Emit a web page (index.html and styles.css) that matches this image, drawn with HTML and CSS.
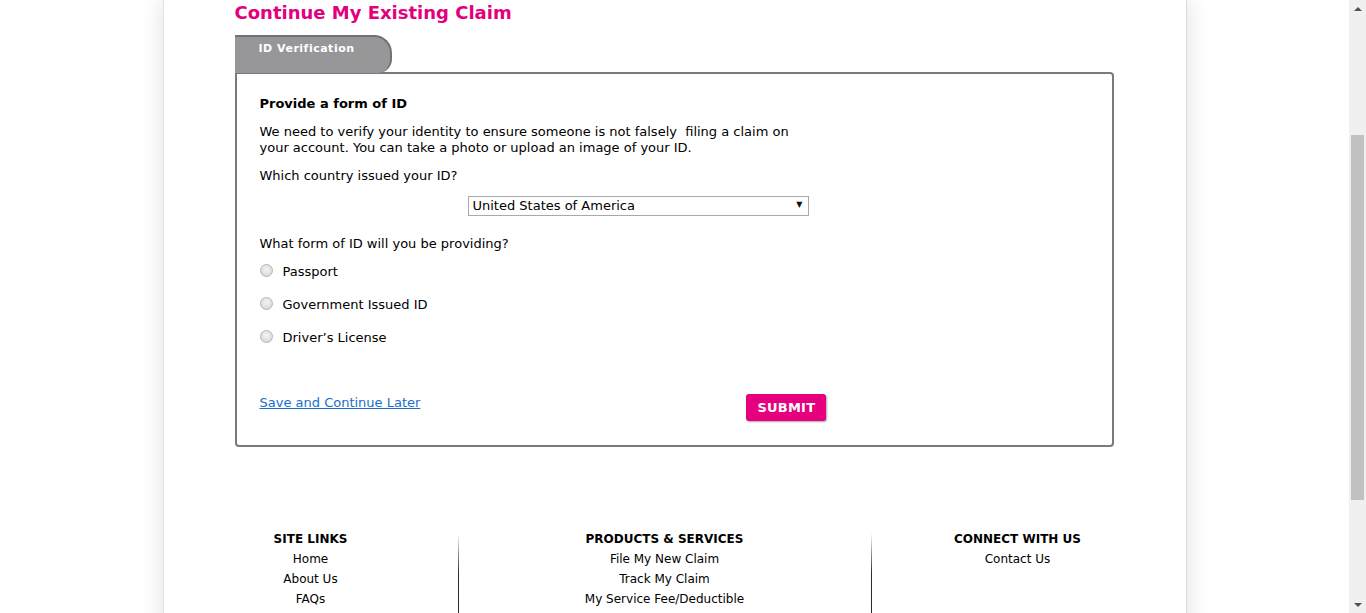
FILE: index.html
```html
<!DOCTYPE html>
<html lang="en">
<head>
<meta charset="utf-8">
<title>Continue My Existing Claim</title>
<link rel="stylesheet" href="styles.css">
</head>
<body>
<div class="viewport">
  <div class="page">
    <main class="main">
      <h1 class="title">Continue My Existing Claim</h1>
      <div class="tab">ID Verification</div>
      <section class="card">
        <h2 class="card-heading">Provide a form of ID</h2>
        <p class="para">We need to verify your identity to ensure someone is not falsely&nbsp; filing a claim on<br>your account. You can take a photo or upload an image of your ID.</p>
        <p class="question">Which country issued your ID?</p>
        <div class="select-row">
          <div class="select-wrap">
            <select class="select">
              <option>United States of America</option>
            </select>
            <span class="select-arrow">&#9660;</span>
          </div>
        </div>
        <p class="question q2">What form of ID will you be providing?</p>
        <div class="radios">
          <label class="radio-row"><input type="radio" name="idtype" class="radio"><span>Passport</span></label>
          <label class="radio-row"><input type="radio" name="idtype" class="radio"><span>Government Issued ID</span></label>
          <label class="radio-row"><input type="radio" name="idtype" class="radio"><span>Driver’s License</span></label>
        </div>
        <div class="actions">
          <a href="#" class="save-link">Save and Continue Later</a>
          <button class="submit" type="button">SUBMIT</button>
        </div>
      </section>
    </main>
    <footer class="footer">
      <div class="fcol fcol1">
        <h3 class="fhead">SITE LINKS</h3>
        <a href="#" class="flink">Home</a>
        <a href="#" class="flink">About Us</a>
        <a href="#" class="flink">FAQs</a>
      </div>
      <div class="fdivider"></div>
      <div class="fcol fcol2">
        <h3 class="fhead">PRODUCTS &amp; SERVICES</h3>
        <a href="#" class="flink">File My New Claim</a>
        <a href="#" class="flink">Track My Claim</a>
        <a href="#" class="flink">My Service Fee/Deductible</a>
      </div>
      <div class="fdivider"></div>
      <div class="fcol fcol3">
        <h3 class="fhead">CONNECT WITH US</h3>
        <a href="#" class="flink">Contact Us</a>
      </div>
    </footer>
  </div>
</div>
<div class="scrollbar">
  <div class="sb-btn sb-up"></div>
  <div class="sb-track"><div class="sb-thumb"></div></div>
  <div class="sb-btn sb-down"></div>
</div>
</body>
</html>
```

FILE: styles.css
```css
* { box-sizing: border-box; }
html, body { margin: 0; padding: 0; }
body {
  display: flex;
  height: 613px;
  overflow: hidden;
  background: #fff;
  font-family: "DejaVu Sans", sans-serif;
  font-size: 13px;
  color: #000;
}
.viewport {
  flex: 1;
  overflow: hidden;
  display: flex;
  justify-content: center;
}
.page {
  width: 1024px;
  background: #fff;
  box-shadow: 0 0 22px rgba(0,0,0,0.13);
  border-left: 1px solid #e4e4e4;
  border-right: 1px solid #dcdcdc;
  min-height: 700px;
}
.main {
  padding: 0 72px 0 71px;
}
.title {
  margin: 0;
  padding-top: 1px;
  font-family: "DejaVu Sans", sans-serif;
  font-weight: bold;
  font-size: 18px;
  line-height: 24px;
  color: #e3007c;
}
.tab {
  margin-top: 10px;
  width: 157px;
  height: 38px;
  background: #97979a;
  border-top: 2px solid #727276;
  border-right: 2px solid #727276;
  border-radius: 0 18px 14px 0;
  color: #fff;
  font-weight: bold;
  font-size: 11px;
  padding: 5px 0 0 24px;
  letter-spacing: 0.5px;
  position: relative;
  z-index: 1;
  margin-bottom: -1px;
}
.card {
  border: 2px solid #7a7a7e;
  border-radius: 0 4px 4px 4px;
  padding: 22px 23px 24px 23px;
  margin-top: -1px;
}
.card-heading {
  margin: 0;
  font-size: 13px;
  font-weight: bold;
  line-height: 16px;
}
.para {
  margin: 12px 0 0;
  line-height: 16px;
}
.question {
  margin: 12px 0 0;
  line-height: 16px;
}
.q2 { margin-top: 20px; }
.select-row {
  margin-top: 12px;
  padding-left: 208px;
}
.select-wrap {
  position: relative;
  width: 341px;
  height: 20px;
}
.select {
  appearance: none;
  -webkit-appearance: none;
  width: 100%;
  height: 20px;
  border: 1px solid #a9a9a9;
  border-radius: 0;
  background: #fff;
  font-family: inherit;
  font-size: 13px;
  color: #000;
  padding: 0 0 0 4px;
  line-height: 18px;
}
.select-arrow {
  position: absolute;
  right: 6px;
  top: 3px;
  font-size: 8px;
  line-height: 12px;
  color: #111;
  pointer-events: none;
}
.radios {
  margin-top: 10px;
  display: flex;
  flex-direction: column;
  gap: 13px;
}
.radio-row {
  display: flex;
  align-items: center;
  height: 20px;
  gap: 10px;
}
.radio {
  appearance: none;
  -webkit-appearance: none;
  margin: -3px 0 0 0;
  width: 13px;
  height: 13px;
  border-radius: 50%;
  border: 1px solid #b4b4b4;
  background: radial-gradient(circle at 50% 40%, #f4f4f4 0%, #dcdcdc 70%, #cfcfcf 100%);
}
.radio-row span { line-height: 16px; }
.actions {
  margin-top: 47px;
  display: flex;
  align-items: flex-start;
}
.save-link {
  color: #1a6ec8;
  text-decoration: underline;
  line-height: 16px;
}
.submit {
  margin-left: 326px;
  margin-top: -1px;
  width: 80px;
  height: 27px;
  border: none;
  border-radius: 3px;
  background: #e6007e;
  color: #fff;
  font-family: "DejaVu Sans", sans-serif;
  font-weight: bold;
  font-size: 13px;
  letter-spacing: 0.2px;
  box-shadow: 1px 1px 2px rgba(0,0,0,0.35);
  padding: 0;
}
.footer {
  margin-top: 82px;
  display: flex;
}
.fcol {
  display: flex;
  flex-direction: column;
  align-items: center;
}
.fcol1 { width: 294px; }
.fcol2 { width: 412px; }
.fcol3 { width: 292px; }
.fhead {
  margin: 0;
  font-size: 12px;
  font-weight: bold;
  line-height: 20px;
}
.flink {
  color: #000;
  font-size: 12px;
  text-decoration: none;
  line-height: 20px;
}
.fdivider {
  width: 1px;
  margin-top: 4px;
  background: linear-gradient(to bottom, rgba(60,40,20,0) 0%, #3a2a1a 40px, #2a2018 100%);
  align-self: stretch;
  min-height: 120px;
}
.scrollbar {
  width: 17px;
  flex: none;
  background: #f0f0f0;
  display: flex;
  flex-direction: column;
}
.sb-btn {
  height: 17px;
  display: flex;
  align-items: center;
  justify-content: center;
}
.sb-up::before {
  content: "";
  border-left: 4px solid transparent;
  border-right: 4px solid transparent;
  border-bottom: 4px solid #505050;
}
.sb-down::before {
  content: "";
  border-left: 4px solid transparent;
  border-right: 4px solid transparent;
  border-top: 4px solid #505050;
}
.sb-track {
  flex: 1;
  padding: 118px 2px 0 2px;
}
.sb-thumb {
  height: 365px;
  background: #c1c1c1;
}
```
